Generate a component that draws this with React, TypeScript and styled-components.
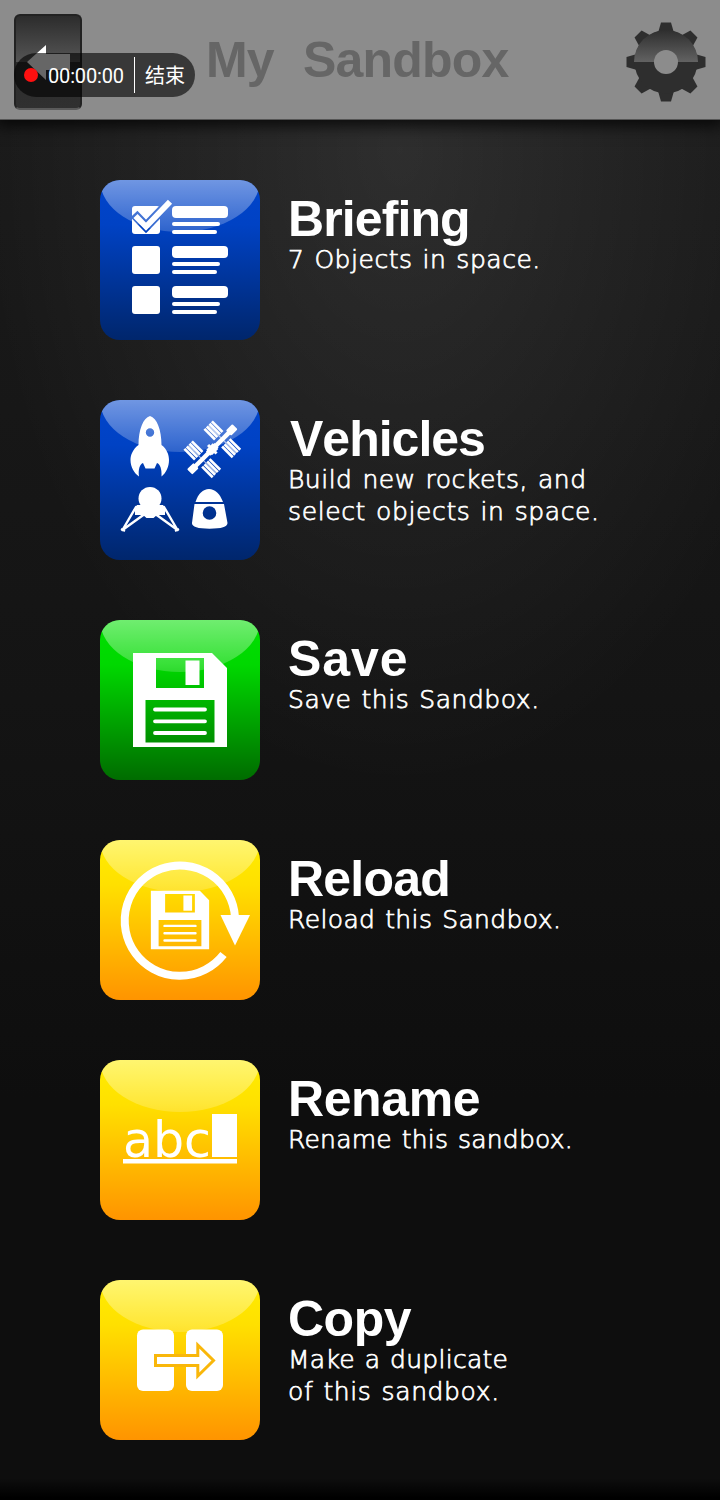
import type { ReactNode } from 'react'
import styled, { createGlobalStyle } from 'styled-components'

const GlobalStyle = createGlobalStyle`
  * { box-sizing: border-box; }
  body {
    margin: 0;
    background: #000;
  }
`

const Screen = styled.div`
  position: relative;
  display: flex;
  flex-direction: column;
  width: 720px;
  height: 1500px;
  overflow: hidden;
  color: #fff;
  font-family: "Liberation Sans", Arial, sans-serif;
  background:
    linear-gradient(180deg, transparent 1478px, #000 1498px),
    radial-gradient(ellipse 420px 640px at 400px 150px, rgba(255, 255, 255, 0.09), rgba(255, 255, 255, 0.035) 60%, transparent),
    linear-gradient(180deg, #1a1a1a 120px, #141414 700px, #0e0e0e 1100px, #0e0e0e);
`

const Header = styled.header`
  display: flex;
  align-items: center;
  justify-content: space-between;
  height: 120px;
  padding: 0 14px;
  background: #8c8c8c;
  border-bottom: 1px solid #555;
  box-shadow: 0 2px 14px 4px rgba(0, 0, 0, 0.75);
`

const BackButton = styled.button`
  width: 68px;
  height: 96px;
  margin-top: 4px;
  padding: 0;
  border: 2px solid #222;
  border-bottom-color: #5a5a5a;
  border-radius: 6px;
  background: linear-gradient(180deg, #2c2c2c, #555 50%, #2c2c2c 50%, #303030);

  svg { display: block; }
`

const PageTitle = styled.h1`
  flex: 1;
  margin: 0 0 0 124px;
  font-size: 50px;
  line-height: 60px;
  letter-spacing: -0.8px;
  word-spacing: 1.5px;
  white-space: pre;
  font-kerning: none;
  color: #666;
`

const Gear = styled.svg`
  display: block;
  width: 80px;
  height: 80px;
  margin-top: 4px;
`

const Recorder = styled.div`
  position: absolute;
  top: 53px;
  left: 14px;
  display: flex;
  align-items: center;
  width: 181px;
  height: 44px;
  padding-left: 10px;
  border-radius: 22px;
  background: rgba(0, 0, 0, 0.6);
  font: 20px/44px Roboto, "Noto Sans CJK SC", sans-serif;
`

const RecordDot = styled.i`
  width: 14px;
  height: 14px;
  margin-right: 10px;
  border-radius: 50%;
  background: #ff1010;
`

const Clock = styled.span`
  width: 86px;
  padding-top: 2px;
  letter-spacing: -0.15px;
`

const StopLabel = styled.span`
  height: 36px;
  padding-left: 10px;
  border-left: 1px solid #fff;
  line-height: 38px;
`

const Menu = styled.main`
  display: flex;
  flex-direction: column;
  gap: 60px;
  padding: 60px 0 0 100px;
`

const Row = styled.section`
  display: flex;
  gap: 28px;
  height: 160px;
`

const palette = {
  blue: '#0044cc 0%, #0042c4 28%, #00266c 100%',
  green: '#00e000 0%, #00d800 28%, #006c00 100%',
  yellow: '#ffee00 0%, #ffe000 28%, #ff9400 100%',
}

const Tile = styled.div<{ $tone: keyof typeof palette }>`
  position: relative;
  width: 160px;
  height: 160px;
  border-radius: 20px;
  overflow: hidden;
  background: linear-gradient(180deg, ${({ $tone }) => palette[$tone]});

  &::before {
    content: "";
    position: absolute;
    top: -52px;
    left: 0;
    width: 160px;
    height: 104px;
    border-radius: 50%;
    background: linear-gradient(180deg, rgba(255, 255, 255, 0.44) 50%, rgba(255, 255, 255, 0.18));
  }

  svg {
    position: relative;
    display: block;
  }
`

const Labels = styled.div`
  padding-top: 10px;
`

const Name = styled.h2<{ $spacing: number; $indent: number }>`
  margin: 0 0 -4px;
  padding-left: ${({ $indent }) => $indent}px;
  font-size: 50px;
  line-height: 58px;
  letter-spacing: ${({ $spacing }) => $spacing}px;
  font-kerning: none;
  font-variant-ligatures: none;
`

const Detail = styled.p<{ $spacing: number }>`
  margin: 0;
  font-family: "DejaVu Sans", Verdana, sans-serif;
  font-size: 25px;
  font-weight: 200;
  line-height: 32px;
  letter-spacing: ${({ $spacing }) => $spacing}px;
  word-spacing: 1.5px;
  -webkit-text-stroke: 0.75px #fff;
`

const Glyph = ({ children }: { children: ReactNode }) => (
  <svg width="160" height="160" viewBox="0 0 160 160" fill="#fff">{children}</svg>
)

const BriefingIcon = () => (
  <Glyph>
    <mask id="tick">
      <rect width="160" height="160" fill="#fff" />
      <path d="M34 34 46 46.500 71.500 20" fill="none" stroke="#000" strokeWidth="9.500" />
    </mask>
    <rect x="32" y="26" width="28" height="28" rx="3" mask="url(#tick)" />
    <path d="M35.500 36 46 46.700 70 21.700" fill="none" stroke="#fff" strokeWidth="5.800" />
    {[0, 40, 80].map(y => (
      <g key={y} transform={`translate(0 ${y})`}>
        {y > 0 && <rect x="32" y="26" width="28" height="28" rx="3" />}
        <rect x="72" y="26" width="56" height="12" rx="4" />
        <rect x="72" y="42" width="48" height="4" rx="2" />
        <rect x="72" y="50" width="45" height="4" rx="2" />
      </g>
    ))}
  </Glyph>
)

const VehiclesIcon = () => (
  <Glyph>
    <path
      fillRule="evenodd"
      d="M50 16C57 18 61.500 30 61.500 45C67 49 69 55 69 60C69 67 66 73 61.500 76.500C62 69 60 64 57 63L54.500 68.500H45.500L43 63C40 64 38 69 39 76.500C34 73 30.500 67 30.500 60C30.500 55 33 49 38.500 45C38.500 30 43 18 50 16ZM50 28.300A4.200 4.200 0 1 0 50 36.700A4.200 4.200 0 1 0 50 28.300Z"
    />
    <g transform="translate(112.300 49.300) rotate(-45)">
      <rect x="-30" y="-2.200" width="60" height="4.400" />
      <rect x="-32" y="-3.700" width="9" height="7.400" rx="1" />
      <rect x="23" y="-3.700" width="9" height="7.400" rx="1" />
      <rect x="-4.500" y="-4" width="9" height="8" />
      <path d="M-1.500-6h3v12h-3zM-6-3h12v6h-12z" />
      {[-20.800, -17.400, -13.600, -10.200, 7.500, 10.900, 14.700, 18.100].map(x => (
        <g key={x}>
          <rect x={x} y="-20" width="2.700" height="15" />
          <rect x={x} y="5" width="2.700" height="15" />
        </g>
      ))}
      <path d="M-14.800-19.500h1.200v39h-1.200zM13.600-19.500h1.200v39h-1.200z" opacity=".6" />
    </g>
    <circle cx="50" cy="98.500" r="11.500" />
    <path d="M37 105H63L65 108V115H57L53.500 118H46.500L43 115H35V108Z" />
    <path d="M36 107 22.500 130M44 114.500 22.500 130M64 107 77.500 130M56 114.500 77.500 130" fill="none" stroke="#fff" strokeWidth="2.400" strokeLinecap="round" />
    <path d="M21 129l4 2M79 129l-4 2" stroke="#fff" strokeWidth="2" />
    <path d="M95.500 102C98 94 103 89 109 89S120 94 123 102Z" />
    <path fillRule="evenodd" d="M94.500 104H124L127.500 123Q127.500 128.700 109.500 128.700T92 123ZM109.500 106.200A6.800 6.800 0 1 0 109.500 119.800A6.800 6.800 0 1 0 109.500 106.200Z" />
  </Glyph>
)

const Floppy = () => (
  <>
    <path
      fillRule="evenodd"
      d="M33 33H112L127 48V127H33ZM56 38V68H104V38ZM45.500 80V122.500H114.500V80Z"
    />
    <rect x="85.500" y="40.500" width="14" height="24.500" />
    <path d="M55 89.500H105M55 101.300H105M55 113H105" stroke="#fff" strokeWidth="3.800" strokeLinecap="round" />
  </>
)

const SaveIcon = () => <Glyph><Floppy /></Glyph>

const ReloadIcon = () => (
  <Glyph>
    <path d="M135 77A55.200 55.200 0 1 0 123.500 114.500" fill="none" stroke="#fff" strokeWidth="8" />
    <path d="M120.500 75H150L135 105.500Z" />
    <g transform="translate(80 80) scale(.62) translate(-80 -80)"><Floppy /></g>
  </Glyph>
)

const RenameIcon = () => (
  <Glyph>
    <text x="23" y="97" fontFamily="DejaVu Sans, sans-serif" fontSize="49" textLength="88">abc</text>
    <rect x="112" y="54" width="25" height="43" />
    <rect x="23" y="99" width="114" height="4.500" />
  </Glyph>
)

const CopyIcon = () => (
  <Glyph>
    <rect x="37" y="49.500" width="37" height="61.500" rx="6" />
    <rect x="86" y="49.500" width="37" height="61.500" rx="6" />
    <path d="M55.500 75.500H97.800V65L113.500 80.500L97.800 96V85.500H55.500Z" stroke="#f9b70a" strokeWidth="3" />
  </Glyph>
)

const BackArrow = () => (
  <svg width="64" height="92" viewBox="16 16 64 92">
    <path d="M27 62 46 45V54H70V70H46V80Z" fill="#fff" />
  </svg>
)

const SettingsIcon = () => (
  <Gear viewBox="-40 -40 80 80">
    <defs>
      <linearGradient id="shine" x1="0" y1="0" x2="0" y2="1">
        <stop offset="0" stopColor="#2e2e2e" />
        <stop offset="1" stopColor="#626262" />
      </linearGradient>
    </defs>
    {[0, 45, 90, 135, 180, 225, 270, 315].map(a => (
      <path key={a} d="M-8-29-5-39.500H5L8-29Z" fill="#2e2e2e" transform={`rotate(${a})`} />
    ))}
    <circle r="31.500" fill="#2e2e2e" />
    <path d="M-32 0A32 32 0 0 1 32 0Z" fill="url(#shine)" />
    <circle r="12" fill="#8c8c8c" />
  </Gear>
)

type Item = {
  name: string
  spacing: number
  indent?: number
  lines: [text: string, spacing: number][]
  tone: keyof typeof palette
  icon: ReactNode
}

const items: Item[] = [
  { name: 'Briefing', spacing: -0.9, lines: [['7 Objects in space.', 0.53]], tone: 'blue', icon: <BriefingIcon /> },
  { name: 'Vehicles', spacing: -1, indent: 2, lines: [['Build new rockets, and', 0.5], ['select objects in space.', 0.62]], tone: 'blue', icon: <VehiclesIcon /> },
  { name: 'Save', spacing: 0.9, lines: [['Save this Sandbox.', 0.54]], tone: 'green', icon: <SaveIcon /> },
  { name: 'Reload', spacing: -0.8, lines: [['Reload this Sandbox.', 0.38]], tone: 'yellow', icon: <ReloadIcon /> },
  { name: 'Rename', spacing: -0.4, lines: [['Rename this sandbox.', 0.24]], tone: 'yellow', icon: <RenameIcon /> },
  { name: 'Copy', spacing: -0.5, lines: [['Make a duplicate', 0.28], ['of this sandbox.', 0.62]], tone: 'yellow', icon: <CopyIcon /> },
]

const App = () => (
  <>
    <GlobalStyle />
    <Screen>
      <Header>
        <BackButton aria-label="Back"><BackArrow /></BackButton>
        <PageTitle>{'My  Sandbox'}</PageTitle>
        <SettingsIcon />
      </Header>
      <Menu>
        {items.map(({ name, spacing, indent = 0, lines, tone, icon }) => (
          <Row key={name}>
            <Tile $tone={tone}>{icon}</Tile>
            <Labels>
              <Name $spacing={spacing} $indent={indent}>{name}</Name>
              {lines.map(([text, gap]) => <Detail key={text} $spacing={gap}>{text}</Detail>)}
            </Labels>
          </Row>
        ))}
      </Menu>
      <Recorder>
        <RecordDot />
        <Clock>00:00:00</Clock>
        <StopLabel>结束</StopLabel>
      </Recorder>
    </Screen>
  </>
)

export default App
